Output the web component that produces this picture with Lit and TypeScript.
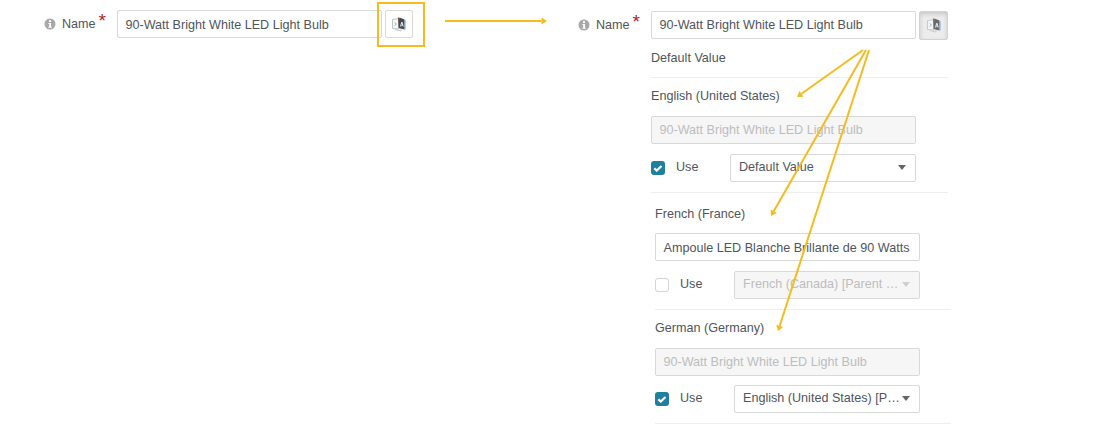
import { LitElement, html, css, svg } from "lit";
import { customElement } from "lit/decorators.js";

const BULB = "90-Watt Bright White LED Light Bulb";

const infoIcon = html`<svg class="info" viewBox="0 0 12 12" width="12" height="12" aria-hidden="true">
  <circle cx="6" cy="6" r="5.5" fill="#a8a8a8"></circle>
  <rect x="5" y="2.2" width="2" height="1.8" fill="#fff"></rect>
  <path d="M4.4 5h2.6v3.7h.8v1H4.4v-1h.8V6h-.8z" fill="#fff"></path>
</svg>`;

const translateIcon = html`<svg viewBox="0 0 16 16" width="16" height="16" aria-hidden="true">
  <path d="M1.500 3.500 8 2.500v10.500l-6.500-.5z" fill="#f6f6f6" stroke="#b9c4c9" stroke-width="1"></path>
  <path d="M3.500 6.500l2 1.500-2 1.500" fill="none" stroke="#9db2bb" stroke-width="1"></path>
  <path d="M4 13.500l6 1.500v-2" fill="none" stroke="#c4c4c4" stroke-width="1"></path>
  <path d="M7 1.500l1.500.5v-.5l5 2v10L7.500 12z" fill="#4a4a4c"></path>
  <path d="M7 1.500l2 .7v1H7z" fill="#8a5a3a"></path>
  <path d="M13.500 4h1v9.500h-1z" fill="#5aa0d0"></path>
  <path d="M10.300 6 9 10.500h1l.3-1h1.100l.3 1h1L11.400 6zm.2 1.500.5 1.300h-.8z" fill="#e8eef2"></path>
</svg>`;

const check = html`<svg viewBox="0 0 14 14" width="14" height="14" aria-hidden="true">
  <path d="M3.300 7.300l2.500 2.200 4.700-4.500" fill="none" stroke="#fff" stroke-width="2.300"></path>
</svg>`;

const Y = "#f5bb1f";
const arrow = (x1: number, y1: number, x2: number, y2: number) => {
  const a = Math.atan2(y2 - y1, x2 - x1);
  const s = 5.5, w = 3.6;
  const bx = x2 - Math.cos(a) * s, by = y2 - Math.sin(a) * s;
  const nx = -Math.sin(a) * w, ny = Math.cos(a) * w;
  return svg`<line x1=${x1} y1=${y1} x2=${bx} y2=${by} stroke=${Y} stroke-width="2"></line>
    <polygon points="${x2},${y2} ${bx + nx},${by + ny} ${bx - nx},${by - ny}" fill=${Y}></polygon>`;
};

@customElement("app-root")
export class AppRoot extends LitElement {
  static styles = css`
    :host {
      display: block;
      position: relative;
      width: 1097px;
      height: 432px;
      overflow: hidden;
      background: #fff;
      font-family: "Liberation Sans", Arial, sans-serif;
      font-size: 12.6px;
      color: #50555c;
    }
    .page {
      display: flex;
      align-items: flex-start;
      padding: 10px 0 0 44px;
      gap: 165px;
    }
    .name-row {
      display: flex;
      align-items: flex-start;
      gap: 3px;
    }
    .right .name-row { padding-top: 1px; }
    .right .name-row .input { padding-top: 0; }
    .right .name-row .label { padding-bottom: 1px; box-sizing: border-box; }
    .label {
      width: 70px;
      height: 28px;
      display: flex;
      align-items: center;
      gap: 6px;
      flex: none;
    }
    .info { flex: none; }
    .star {
      color: #a8232b;
      font-size: 19px;
      line-height: 18px;
      align-self: flex-start;
      margin: 2px 0 0 -3px;
    }
    .input {
      box-sizing: border-box;
      height: 28px;
      width: 265px;
      border: 1px solid #d9d9d9;
      border-radius: 2px;
      padding: 1px 7.500px 0;
      display: flex;
      align-items: center;
      white-space: nowrap;
      overflow: hidden;
      flex: none;
      background: #fff;
    }
    .input.disabled {
      background: #f6f6f6;
      color: #bdbdbd;
    }
    .btn {
      box-sizing: border-box;
      width: 28px;
      height: 28px;
      border: 1px solid #d9d9d9;
      border-radius: 2px;
      display: flex;
      align-items: center;
      justify-content: center;
      flex: none;
      background: #fff;
    }
    .btn.active {
      background: #ececec;
      width: 29px;
      height: 29px;
      border: 1px solid #d2d2d2;
      box-shadow: inset 0 2px 4px rgba(0, 0, 0, 0.16);
      margin-top: -0.5px;
    }
    .btn.active svg { opacity: 0.8; }
    .panel {
      margin-left: 73px;
      width: 297px;
    }
    .default {
      line-height: 20px;
      padding: 8px 0 9px;
      border-bottom: 1px solid #eeeeee;
    }
    .lang {
      border-bottom: 1px solid #eeeeee;
      padding-bottom: 10px;
    }
    .lang-label { line-height: 20px; padding-top: 1px; margin-bottom: -1px; }
    .lang .input { margin-top: 11px; }
    .use {
      display: flex;
      align-items: center;
      margin-top: 10px;
      width: 265px;
    }
    .en { padding-top: 7px; }
    .fr, .de { margin-left: 4px; width: 296px; }
    .fr { padding-top: 10px; }
    .fr .input { margin-top: 10px; padding-top: 2px; }
    .de { padding-top: 7px; }
    .de .use { margin-top: 9px; }
    .box {
      box-sizing: border-box;
      width: 14px;
      height: 14px;
      border-radius: 3px;
      flex: none;
      display: flex;
    }
    .box.on { background: #1f7f9f; }
    .box.off { border: 1px solid #d5d5d5; background: #fff; }
    .use-text {
      width: 65px;
      padding-left: 11px;
      box-sizing: border-box;
      flex: none;
      margin-top: -2px;
    }
    .select {
      box-sizing: border-box;
      width: 186px;
      height: 28px;
      border: 1px solid #d9d9d9;
      border-radius: 2px;
      padding: 0 5px 0 8px;
      display: flex;
      align-items: center;
      gap: 2px;
      flex: none;
      background: #fff;
    }
    .select.disabled { background: #f6f6f6; color: #bdbdbd; }
    .select-text {
      flex: 1;
      min-width: 0;
      white-space: nowrap;
      margin-top: -2px;
    }
    .caret {
      flex: none;
      width: 0;
      height: 0;
      margin-right: 4px;
      border-left: 4.500px solid transparent;
      border-right: 4.500px solid transparent;
      border-top: 5px solid #666;
    }
    .select.disabled .caret { border-top-color: #cfcfcf; }
    .notes {
      position: absolute;
      left: 0;
      top: 0;
      pointer-events: none;
    }
  `;

  private nameRow(active: boolean) {
    return html`<div class="name-row">
      <div class="label">${infoIcon}<span>Name</span><span class="star">*</span></div>
      <div class="input">${BULB}</div>
      <div class="btn ${active ? "active" : ""}">${translateIcon}</div>
    </div>`;
  }

  private lang(
    cls: string,
    label: string,
    value: string,
    disabled: boolean,
    on: boolean,
    sel: string,
    selDisabled: boolean
  ) {
    return html`<section class="lang ${cls}">
      <div class="lang-label">${label}</div>
      <div class="input ${disabled ? "disabled" : ""}">${value}</div>
      <div class="use">
        <span class="box ${on ? "on" : "off"}">${on ? check : ""}</span>
        <span class="use-text">Use</span>
        <div class="select ${selDisabled ? "disabled" : ""}">
          <span class="select-text">${sel}</span><span class="caret"></span>
        </div>
      </div>
    </section>`;
  }

  render() {
    return html`<div class="page">
        <div class="left">${this.nameRow(false)}</div>
        <div class="right">
          ${this.nameRow(true)}
          <div class="panel">
            <div class="default">Default Value</div>
            ${this.lang("en", "English (United States)", BULB, true, true, "Default Value", false)}
            ${this.lang("fr", "French (France)", "Ampoule LED Blanche Brillante de 90 Watts", false, false, "French (Canada) [Parent …", true)}
            ${this.lang("de", "German (Germany)", BULB, true, true, "English (United States) [P…", false)}
          </div>
        </div>
      </div>
      <svg class="notes" width="1097" height="432" viewBox="0 0 1097 432" aria-hidden="true">
        <rect x="378" y="3" width="46" height="43" fill="none" stroke=${Y} stroke-width="2"></rect>
        ${arrow(445, 21, 547, 21)}
        ${arrow(863, 50, 797, 97)}
        ${arrow(866, 50, 771, 216)}
        ${arrow(869, 50, 778, 331)}
      </svg>`;
  }
}
